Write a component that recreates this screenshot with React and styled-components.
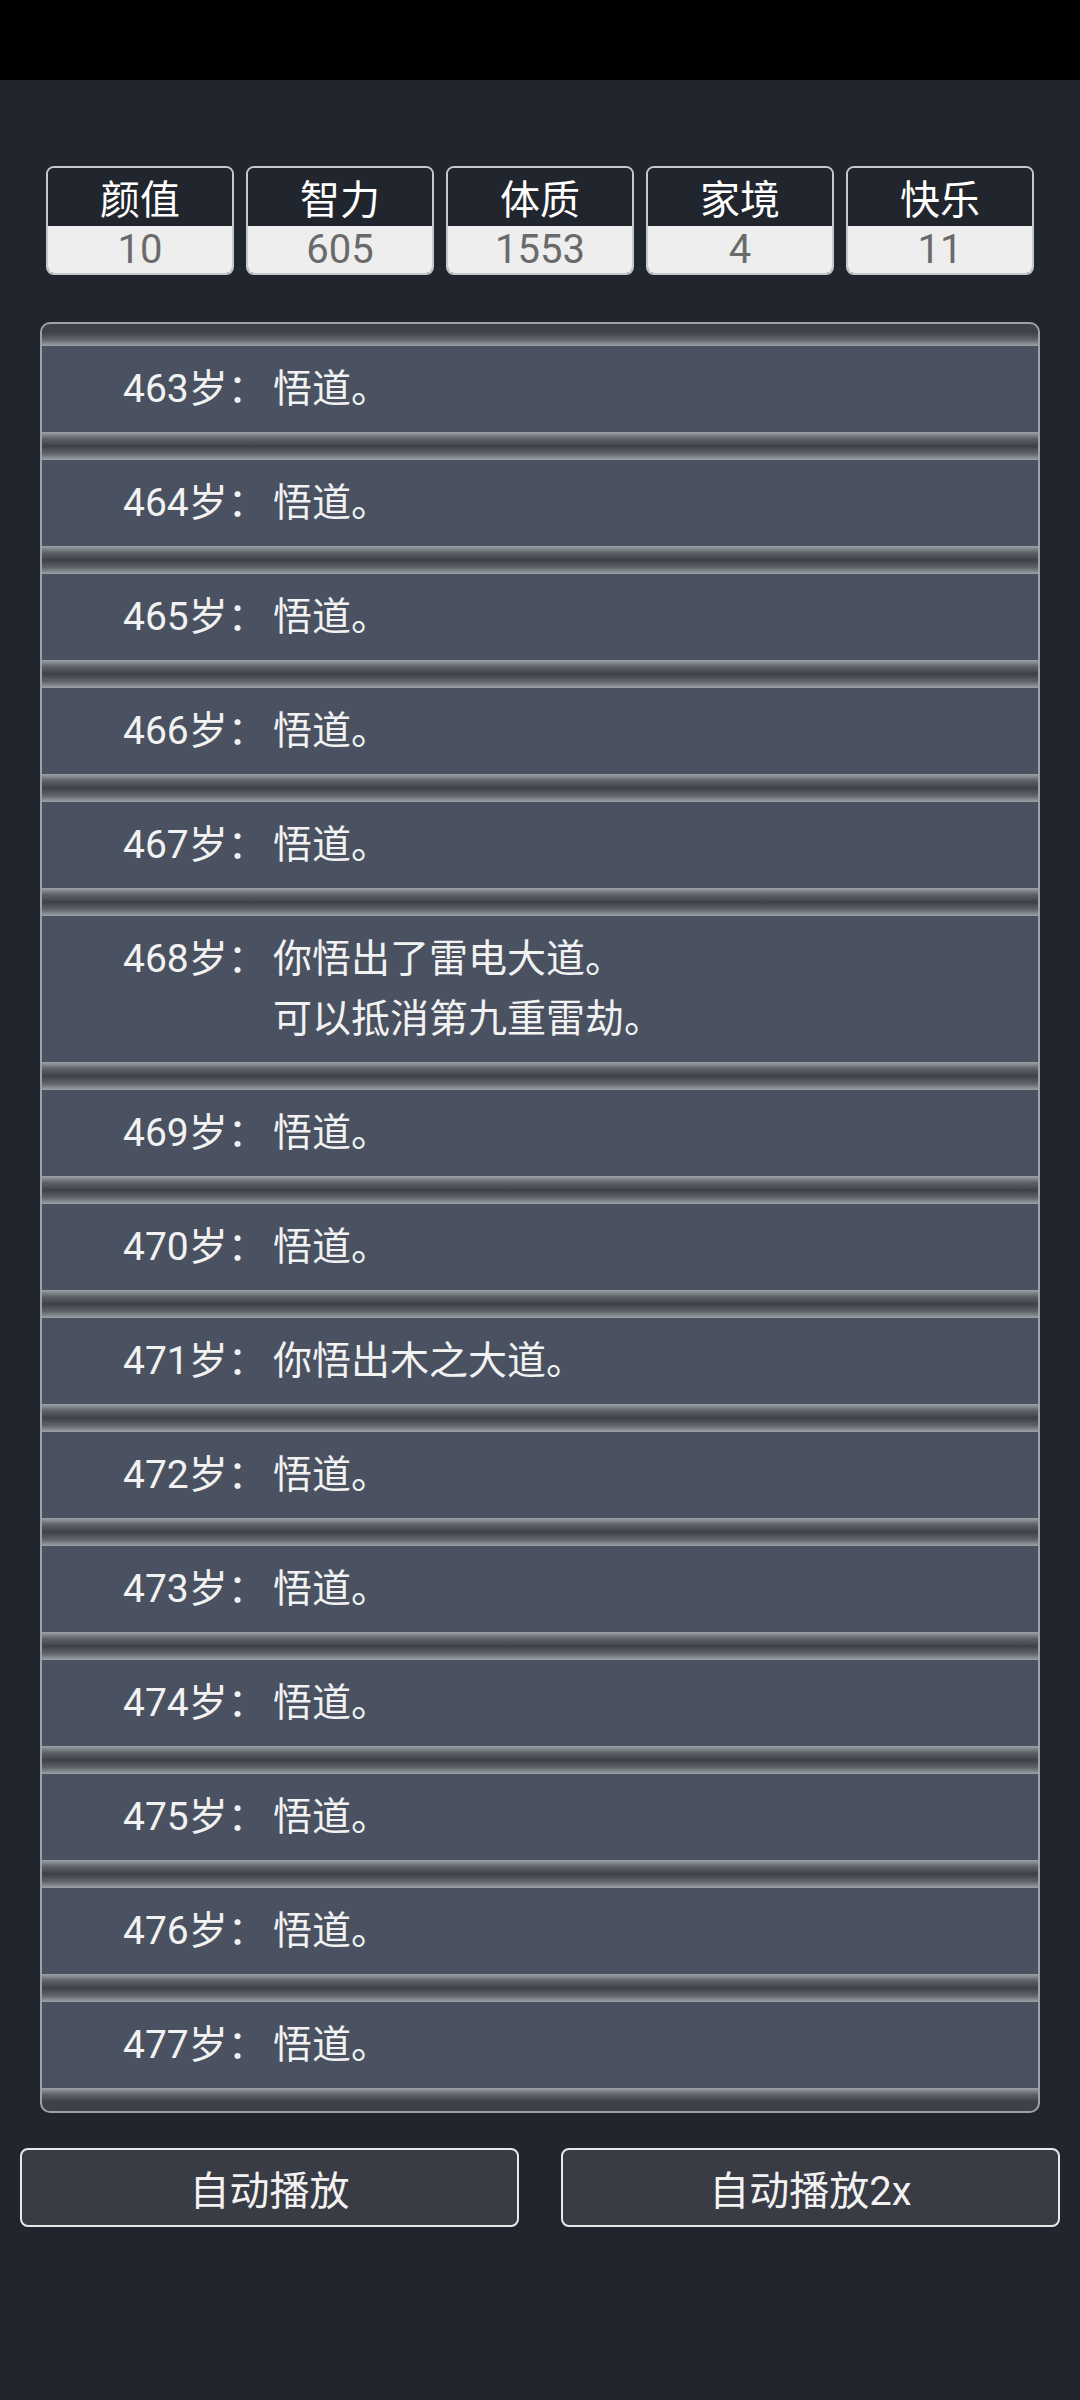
import React from 'react';
import styled, { createGlobalStyle } from 'styled-components';

const GlobalStyle = createGlobalStyle`
    body {
        margin: 0;
        background: #21252e;
        font-family: Roboto, "Noto Sans CJK SC", sans-serif;
    }
`;

// Whole screen
const Screen = styled.div`
    min-height: 2400px;
    background: #21252e;
    display: flex;
    flex-direction: column;
`;

const StatusBar = styled.div`
    height: 80px;
    background: #000;
`;

// Row of the five attribute boxes
const StatRow = styled.div`
    display: grid;
    grid-template-columns: repeat(5, 1fr);
    gap: 12px;
    margin: 86px 46px 0;
`;

const StatBox = styled.div`
    display: flex;
    flex-direction: column;
    border: 2px solid #c6c8cc;
    border-radius: 8px;
    overflow: hidden;
    height: 109px;
    box-sizing: border-box;
`;

const StatLabel = styled.div`
    height: 58px;
    display: flex;
    align-items: center;
    justify-content: center;
    color: #ffffff;
    font-size: 40px;
    background: #21252e;
`;

const StatValue = styled.div`
    flex: 1;
    display: flex;
    align-items: center;
    justify-content: center;
    background: #eeeeee;
    color: #6a6a6a;
    font-size: 40px;
    line-height: 1;
`;

// Life trajectory panel
const Panel = styled.ul`
    list-style: none;
    margin: 47px 40px 0;
    padding: 8px 0 9px;
    border: 2px solid #9da1a8;
    border-radius: 10px;
    overflow: hidden;
    background: #3d4148;
`;

const Entry = styled.li`
    display: flex;
    padding: 27px 0 27px 81px;
    line-height: 60px;
    font-size: 39px;
    color: #f2f2f2;
    background:
        linear-gradient(to bottom, #3c4047, #60646b 55%, #9ea2a9) top / 100% 14px no-repeat,
        linear-gradient(to bottom, #9ea2a9, #60646b 45%, #3c4047) bottom / 100% 14px no-repeat,
        #4a5262;
`;

const Age = styled.span`
    flex: 0 0 150px;
`;

const Text = styled.span`
    flex: 1;
    white-space: pre-line;
`;

// Bottom buttons
const ButtonRow = styled.div`
    display: grid;
    grid-template-columns: 1fr 1fr;
    gap: 42px;
    margin: 35px 20px 0;
`;

const PlayButton = styled.button`
    height: 79px;
    background: #393c45;
    border: 2px solid #e8e8e8;
    border-radius: 8px;
    color: #f2f2f2;
    font-family: Roboto, "Noto Sans CJK SC", sans-serif;
    font-size: 40px;
    padding: 0;
`;

const stats = [
    { label: '颜值', value: 10 },
    { label: '智力', value: 605 },
    { label: '体质', value: 1553 },
    { label: '家境', value: 4 },
    { label: '快乐', value: 11 },
];

const events = [
    { age: 463, text: '悟道。' },
    { age: 464, text: '悟道。' },
    { age: 465, text: '悟道。' },
    { age: 466, text: '悟道。' },
    { age: 467, text: '悟道。' },
    { age: 468, text: '你悟出了雷电大道。\n可以抵消第九重雷劫。' },
    { age: 469, text: '悟道。' },
    { age: 470, text: '悟道。' },
    { age: 471, text: '你悟出木之大道。' },
    { age: 472, text: '悟道。' },
    { age: 473, text: '悟道。' },
    { age: 474, text: '悟道。' },
    { age: 475, text: '悟道。' },
    { age: 476, text: '悟道。' },
    { age: 477, text: '悟道。' },
];

export default function App() {
    return (
        <Screen>
            <GlobalStyle />
            <StatusBar />
            <StatRow>
                {stats.map(s => (
                    <StatBox key={s.label}>
                        <StatLabel>{s.label}</StatLabel>
                        <StatValue>{s.value}</StatValue>
                    </StatBox>
                ))}
            </StatRow>
            <Panel>
                {events.map(e => (
                    <Entry key={e.age}>
                        <Age>{e.age}岁：</Age>
                        <Text>{e.text}</Text>
                    </Entry>
                ))}
            </Panel>
            <ButtonRow>
                <PlayButton>自动播放</PlayButton>
                <PlayButton>自动播放2x</PlayButton>
            </ButtonRow>
        </Screen>
    );
}
